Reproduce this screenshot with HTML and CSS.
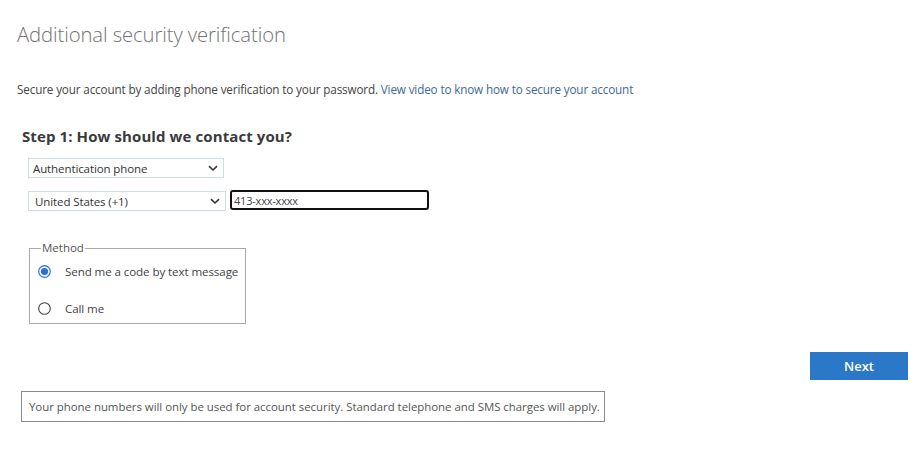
FILE: index.html
```html
<!DOCTYPE html>
<html>
<head>
<meta charset="utf-8">
<link rel="stylesheet" href="styles.css">
</head>
<body>
<div class="page">
  <h1 class="title">Additional security verification</h1>
  <p class="intro">Secure your account by adding phone verification to your password. <a class="link" href="#">View video to know how to secure your account</a></p>
  <h2 class="step">Step 1: How should we contact you?</h2>
  <div class="row row-first">
    <div class="select select-type"><span>Authentication phone</span><svg class="chev" width="10" height="7" viewBox="0 0 10 7"><path d="M1 1.2 L5 5 L9 1.2" fill="none" stroke="#333" stroke-width="1.6"/></svg></div>
  </div>
  <div class="row row-second">
    <div class="select select-country"><span>United States (+1)</span><svg class="chev" width="10" height="7" viewBox="0 0 10 7"><path d="M1 1.2 L5 5 L9 1.2" fill="none" stroke="#333" stroke-width="1.6"/></svg></div>
    <input class="phone" type="text" value="413-xxx-xxxx">
  </div>
  <fieldset class="method">
    <legend class="legend">Method</legend>
    <div class="option option-first">
      <svg class="radio" width="13" height="13" viewBox="0 0 13 13"><circle cx="6.5" cy="6.5" r="5.8" fill="#fff" stroke="#2c6fd4" stroke-width="1.2"/><circle cx="6.5" cy="6.5" r="3.6" fill="#2c6fd4"/></svg>
      <span>Send me a code by text message</span>
    </div>
    <div class="option option-second">
      <svg class="radio" width="13" height="13" viewBox="0 0 13 13"><circle cx="6.5" cy="6.5" r="5.8" fill="#fff" stroke="#444" stroke-width="1.1"/></svg>
      <span>Call me</span>
    </div>
  </fieldset>
  <div class="actions">
    <button class="next" type="button">Next</button>
  </div>
  <div class="notice">Your phone numbers will only be used for account security. Standard telephone and SMS charges will apply.</div>
</div>
</body>
</html>
```
FILE: styles.css
```css
* { box-sizing: border-box; }
body {
  margin: 0;
  background: #fff;
  font-family: "Open Sans", "Noto Sans", "Liberation Sans", sans-serif;
  color: #444;
}
.page {
  width: 922px;
  height: 449px;
  overflow: hidden;
}
.title {
  margin: 0 0 0 17px;
  padding-top: 19px;
  font-size: 20.3px;
  line-height: 30px;
  font-weight: 300;
  color: #737373;
  letter-spacing: -0.1px;
}
.intro {
  margin: 32px 0 0 17px;
  font-size: 11.7px;
  line-height: 16px;
  color: #444;
  letter-spacing: -0.14px;
}
.link {
  color: #3e6896;
  text-decoration: none;
}
.step {
  margin: 29px 0 0 22px;
  font-size: 15px;
  line-height: 20px;
  font-weight: 700;
  color: #3b3b3b;
  letter-spacing: 0.1px;
}
.row {
  display: flex;
  gap: 4px;
  margin-left: 28px;
}
.row-first { margin-top: 12px; }
.row-second { margin-top: 13px; }
.select {
  display: flex;
  align-items: center;
  justify-content: space-between;
  height: 20px;
  border: 1px solid #cfdcea;
  padding: 0 5px 0 4px;
  font-size: 11.5px;
  color: #333;
  letter-spacing: -0.1px;
}
.select-type { width: 196px; }
.select-country { width: 198px; padding-left: 6px; }
.chev { display: block; }
.phone {
  width: 199px;
  height: 20px;
  margin: -1px 0 0 0;
  border: 2px solid #111;
  border-radius: 3px;
  padding: 0 2px;
  font-family: "Open Sans", "Noto Sans", sans-serif;
  font-size: 11px;
  color: #444;
  outline: none;
  letter-spacing: -0.2px;
}
.method {
  width: 217px;
  height: 83px;
  margin: 30px 0 0 29px;
  padding: 0 0 0 8px;
  border: 1px solid #a9a9a9;
}
.legend {
  margin-left: 3px;
  padding: 0 1px;
  font-size: 11.5px;
  line-height: 14px;
  color: #555;
}
.option {
  display: flex;
  align-items: center;
  gap: 14px;
  font-size: 11.6px;
  color: #444;
  letter-spacing: -0.1px;
}
.option-first { margin-top: 9px; }
.option-second { margin-top: 22px; }
.radio { display: block; flex: none; }
.actions {
  display: flex;
  justify-content: flex-end;
  padding-right: 14px;
  margin-top: 28px;
}
.next {
  width: 98px;
  height: 28px;
  border: none;
  background: #2b78c8;
  color: #fff;
  font-family: "Open Sans", "Noto Sans", sans-serif;
  font-size: 13px;
  font-weight: 600;
}
.notice {
  width: 584px;
  height: 31px;
  margin: 11px 0 0 21px;
  border: 1px solid #8a8a8a;
  padding: 0 0 0 7px;
  display: flex;
  align-items: center;
  white-space: nowrap;
  font-size: 11.45px;
  color: #555;
  letter-spacing: -0.03px;
}
```
